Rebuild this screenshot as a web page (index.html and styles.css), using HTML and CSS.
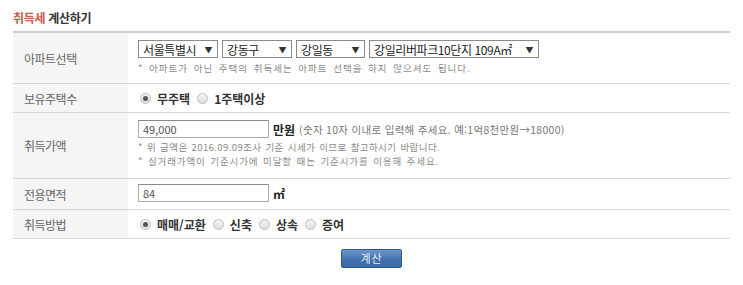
FILE: index.html
```html
<!DOCTYPE html>
<html lang="ko">
<head>
<meta charset="utf-8">
<title>취득세 계산하기</title>
<link rel="stylesheet" href="styles.css">
</head>
<body>
<div class="wrap">
  <h2 class="title"><span class="hl">취득세</span> 계산하기</h2>
  <div class="form">
    <div class="row row-apt">
      <div class="label">아파트선택</div>
      <div class="cell">
        <div class="selects">
          <span class="select s1"><span>서울특별시</span><span class="arr">▼</span></span>
          <span class="select s2"><span>강동구</span><span class="arr">▼</span></span>
          <span class="select s3"><span>강일동</span><span class="arr">▼</span></span>
          <span class="select s4"><span>강일리버파크10단지 109A㎡</span><span class="arr">▼</span></span>
        </div>
        <p class="note wide">* 아파트가 아닌 주택의 취득세는 아파트 선택을 하지 않으셔도 됩니다.</p>
      </div>
    </div>
    <div class="row row-own">
      <div class="label">보유주택수</div>
      <div class="cell radios">
        <span class="radio on"></span><span class="rtext">무주택</span>
        <span class="radio"></span><span class="rtext">1주택이상</span>
      </div>
    </div>
    <div class="row row-price">
      <div class="label">취득가액</div>
      <div class="cell">
        <div class="inline">
          <span class="input">49,000</span>
          <span class="unit">만원</span>
          <span class="hint">(숫자 10자 이내로 입력해 주세요. 예:1억8천만원→18000)</span>
        </div>
        <p class="note n1">* 위 금액은 2016.09.09조사 기준 시세가 이므로 참고하시기 바랍니다.</p>
        <p class="note n2">* 실거래가액이 기준시가에 미달할 때는 기준시가를 이용해 주세요.</p>
      </div>
    </div>
    <div class="row row-area">
      <div class="label">전용면적</div>
      <div class="cell">
        <div class="inline">
          <span class="input">84</span>
          <span class="unit">㎡</span>
        </div>
      </div>
    </div>
    <div class="row row-way">
      <div class="label">취득방법</div>
      <div class="cell radios">
        <span class="radio on"></span><span class="rtext">매매/교환</span>
        <span class="radio"></span><span class="rtext">신축</span>
        <span class="radio"></span><span class="rtext">상속</span>
        <span class="radio"></span><span class="rtext">증여</span>
      </div>
    </div>
  </div>
  <div class="actions">
    <button class="btn" type="button">계산</button>
  </div>
</div>
</body>
</html>
```
FILE: styles.css
```css
html, body {
  margin: 0;
  padding: 0;
  background: #fff;
}
body {
  font-family: "Noto Sans CJK KR", "DejaVu Sans", sans-serif;
  color: #333;
  font-size: 12px;
}
.wrap {
  width: 717px;
  padding-left: 13px;
}
.title {
  margin: 0;
  padding-top: 10px;
  height: 21px;
  line-height: 16px;
  font-size: 12px;
  font-weight: bold;
  color: #333;
  letter-spacing: -0.3px;
}
.title .hl {
  color: #c65b4b;
}
.form {
  border-top: 2px solid #cfcfcf;
}
.row {
  display: flex;
  border-bottom: 1px solid #d8d8d8;
}
.label {
  width: 104px;
  flex: none;
  padding-left: 11px;
  background: #f5f5f5;
  color: #666;
  display: flex;
  align-items: center;
  font-size: 12px;
  letter-spacing: -0.5px;
}
.cell {
  flex: 1;
  padding-left: 10px;
}
.row-apt { height: 50px; }
.row-apt .cell { padding-top: 7px; }
.row-own { height: 28px; }
.row-price { height: 65px; }
.row-price .cell { padding-top: 7px; }
.row-area { height: 30px; }
.row-area .cell { padding-top: 5px; }
.row-way { height: 28px; }

.selects {
  display: flex;
  gap: 4px;
}
.select {
  box-sizing: border-box;
  height: 18px;
  border: 1px solid #8a8a8a;
  display: flex;
  align-items: center;
  justify-content: space-between;
  padding: 0 5px 0 4px;
  font-size: 12px;
  color: #222;
  letter-spacing: -0.4px;
  background: #fff;
}
.select .arr {
  font-size: 8px;
  color: #333;
}
.s1 { width: 80px; }
.s2 { width: 70px; }
.s3 { width: 69px; }
.s4 { width: 170px; }

.note {
  margin: 0;
  font-size: 9.5px;
  line-height: 14px;
  color: #8a8a8a;
  letter-spacing: 0.4px;
  word-spacing: 1px;
  white-space: nowrap;
}
.note.wide { letter-spacing: 1px; word-spacing: 2px; }
.note.n2 { letter-spacing: 0.9px; word-spacing: 1px; }
.row-apt .note { margin-top: 3px; }
.row-price .note.n1 { margin-top: 2px; }

.inline {
  display: flex;
  align-items: center;
}
.input {
  box-sizing: border-box;
  width: 131px;
  height: 18px;
  border: 1px solid #aaa;
  border-top-color: #888;
  padding-left: 4px;
  font-size: 11px;
  line-height: 16px;
  color: #555;
}
.unit {
  margin-left: 4px;
  font-weight: bold;
  font-size: 12px;
  color: #222;
}
.hint {
  margin-left: 4px;
  font-size: 10.5px;
  color: #777;
  letter-spacing: 0.3px;
}

.radios {
  display: flex;
  align-items: center;
}
.radio {
  box-sizing: border-box;
  width: 11px;
  height: 11px;
  border-radius: 50%;
  border: 1px solid #bdbdbd;
  background: linear-gradient(#f4f4f4, #dedede);
  display: inline-flex;
  align-items: center;
  justify-content: center;
  margin-left: 4px;
  margin-right: 6px;
}
.radio:first-child { margin-left: 2px; }
.radio.on::after {
  content: "";
  width: 5px;
  height: 5px;
  border-radius: 50%;
  background: #555;
}
.rtext {
  font-weight: bold;
  font-size: 12px;
  color: #333;
  margin-right: 3px;
}

.actions {
  display: flex;
  justify-content: center;
  padding-top: 10px;
}
.btn {
  width: 61px;
  height: 19px;
  padding: 0;
  border: 1px solid #2f5a8e;
  border-radius: 2px;
  background: linear-gradient(#6d97c9, #4273b0 55%, #3a68a3);
  color: #e8eef8;
  font-family: "Noto Sans CJK KR", "DejaVu Sans", sans-serif;
  font-size: 11px;
  line-height: 17px;
  letter-spacing: 1px;
}
```
